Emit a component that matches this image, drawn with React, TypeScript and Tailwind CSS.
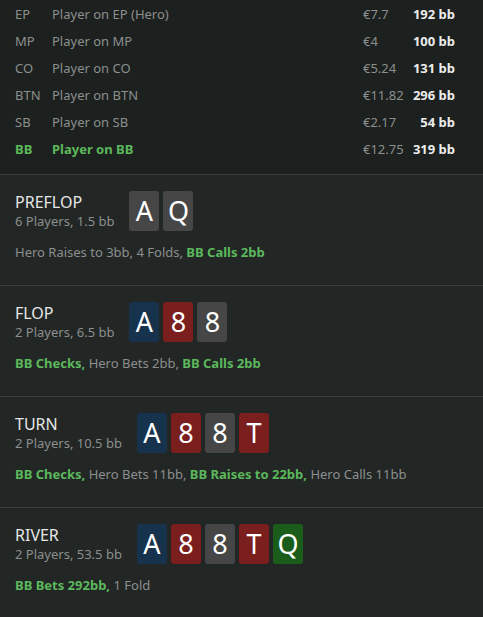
import React from 'react';

const players = [
  { pos: 'EP', name: 'Player on EP (Hero)', money: '€7.7', stack: '192 bb' },
  { pos: 'MP', name: 'Player on MP', money: '€4', stack: '100 bb' },
  { pos: 'CO', name: 'Player on CO', money: '€5.24', stack: '131 bb' },
  { pos: 'BTN', name: 'Player on BTN', money: '€11.82', stack: '296 bb' },
  { pos: 'SB', name: 'Player on SB', money: '€2.17', stack: '54 bb' },
  { pos: 'BB', name: 'Player on BB', money: '€12.75', stack: '319 bb', active: true },
];

type Card = { rank: string; suit: 'gray' | 'blue' | 'red' | 'green' };

const suitBg = {
  gray: 'bg-[#464646]',
  blue: 'bg-[#16324c]',
  red: 'bg-[#7a1e1e]',
  green: 'bg-[#1a5c1a]',
};

const streets: {
  name: string;
  info: string;
  cards: Card[];
  actions: { text: string; villain?: boolean }[];
}[] = [
  {
    name: 'PREFLOP',
    info: '6 Players, 1.5 bb',
    cards: [
      { rank: 'A', suit: 'gray' },
      { rank: 'Q', suit: 'gray' },
    ],
    actions: [{ text: 'Hero Raises to 3bb,' }, { text: '4 Folds,' }, { text: 'BB Calls 2bb', villain: true }],
  },
  {
    name: 'FLOP',
    info: '2 Players, 6.5 bb',
    cards: [
      { rank: 'A', suit: 'blue' },
      { rank: '8', suit: 'red' },
      { rank: '8', suit: 'gray' },
    ],
    actions: [{ text: 'BB Checks,', villain: true }, { text: 'Hero Bets 2bb,' }, { text: 'BB Calls 2bb', villain: true }],
  },
  {
    name: 'TURN',
    info: '2 Players, 10.5 bb',
    cards: [
      { rank: 'A', suit: 'blue' },
      { rank: '8', suit: 'red' },
      { rank: '8', suit: 'gray' },
      { rank: 'T', suit: 'red' },
    ],
    actions: [
      { text: 'BB Checks,', villain: true },
      { text: 'Hero Bets 11bb,' },
      { text: 'BB Raises to 22bb,', villain: true },
      { text: 'Hero Calls 11bb' },
    ],
  },
  {
    name: 'RIVER',
    info: '2 Players, 53.5 bb',
    cards: [
      { rank: 'A', suit: 'blue' },
      { rank: '8', suit: 'red' },
      { rank: '8', suit: 'gray' },
      { rank: 'T', suit: 'red' },
      { rank: 'Q', suit: 'green' },
    ],
    actions: [{ text: 'BB Bets 292bb,', villain: true }, { text: '1 Fold' }],
  },
];

export default function App() {
  return (
    <div className="min-h-[617px] w-[483px] bg-[#222625] font-['Noto_Sans','Liberation_Sans',sans-serif] text-[13px] text-[#8c8f8e]">
      <div className="bg-[#1c201e] pb-[11px] pt-[1px]">
        {players.map((p) => (
          <div key={p.pos} className="flex h-[27px] items-center whitespace-nowrap pl-[15px] pr-[28px]">
            <span className={`w-[37px] ${p.active ? 'font-bold text-[#5cb85c]' : ''}`}>{p.pos}</span>
            <span className={`flex-1 ${p.active ? 'font-bold text-[#5cb85c]' : ''}`}>{p.name}</span>
            <span className="w-[46px]">{p.money}</span>
            <span className="w-[46px] text-right font-bold text-[#ececec]">{p.stack}</span>
          </div>
        ))}
      </div>

      {streets.map((s) => (
        <div key={s.name} className="border-t border-[#3b3e3d] px-[15px] pb-[24px] pt-[16px]">
          <div className="flex items-center gap-[15px]">
            <div className="flex flex-col">
              <span className="text-[16px] leading-[20px] text-[#e6e6e6]">{s.name}</span>
              <span className="leading-[18px]">{s.info}</span>
            </div>
            <div className="flex gap-[4px]">
              {s.cards.map((c, i) => (
                <div
                  key={i}
                  className={`flex h-[40px] w-[30px] items-center justify-center rounded-[3px] text-[27px] text-white ${suitBg[c.suit]}`}
                >
                  {c.rank}
                </div>
              ))}
            </div>
          </div>
          <div className="mt-[12px] leading-[18px]">
            {s.actions.map((a, i) => (
              <span key={i} className={a.villain ? 'font-bold text-[#5cb85c]' : ''}>
                {i > 0 ? ' ' : ''}
                {a.text}
              </span>
            ))}
          </div>
        </div>
      ))}
    </div>
  );
}
